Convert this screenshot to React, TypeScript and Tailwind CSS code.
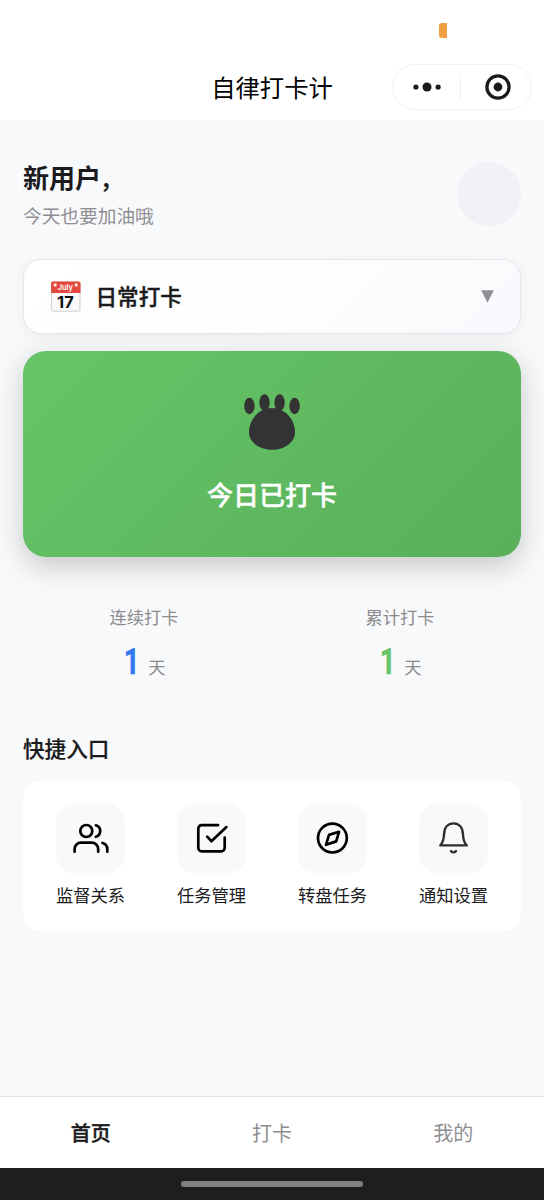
import type { ReactNode } from "react";

interface StatProps {
	label: string;
	value: number;
	valueClassName: string;
}

interface Shortcut {
	id: number;
	label: string;
	icon: ReactNode;
}

const shortcuts: Shortcut[] = [
	{
		id: 1,
		label: "监督关系",
		icon: (
			<g stroke="#000" strokeWidth="2.7">
				<circle cx="13.8" cy="10.5" r="6" />
				<path d="M23.4 4.8A6 6 0 0 1 23.4 16.3" />
				<path d="M2.1 31.2V28.6A6.4 6.4 0 0 1 8.5 22.2H19.3A6.4 6.4 0 0 1 25.7 28.6V31.2" />
				<path d="M30 22.5C33 23.4 34.8 25.8 34.8 28.6V31.2" />
			</g>
		),
	},
	{
		id: 2,
		label: "任务管理",
		icon: (
			<g stroke="#000" strokeWidth="2.7">
				<path d="M24.5 4.7H8.2A3.4 3.4 0 0 0 4.8 8.1V27.4A3.4 3.4 0 0 0 8.2 30.8H27.8A3.4 3.4 0 0 0 31.2 27.4V17.2" />
				<path d="M13.7 16.2L17.9 20.7L32.9 6.6" />
			</g>
		),
	},
	{
		id: 3,
		label: "转盘任务",
		icon: (
			<g stroke="#000" strokeWidth="2.7">
				<circle cx="17.9" cy="17.6" r="14.4" />
				<path d="M24.5 11.3L21.7 20.9L11.5 24.3L14.5 14.4Z" />
			</g>
		),
	},
	{
		id: 4,
		label: "通知设置",
		icon: (
			<g stroke="#2f2f31" strokeWidth="2.4">
				<path d="M4.8 24.9H31.2C28.4 21.8 27.7 18.4 27.5 14.2C27.3 7 23.6 2.9 18 2.9C12.4 2.9 8.7 7 8.5 14.2C8.3 18.4 7.6 21.8 4.8 24.9Z" />
				<path d="M15.5 30.6Q18 33.2 20.5 30.6" />
			</g>
		),
	},
];

const tabs = [
	{ id: 1, label: "首页", active: true },
	{ id: 2, label: "打卡", active: false },
	{ id: 3, label: "我的", active: false },
];

function Header() {
	return (
		<header className="relative h-[120px] shrink-0 bg-white">
			<div className="absolute left-[439px] top-[23px] h-[15px] w-[8px] rounded-l-[3px] bg-[#f0a040]" />
			<h1 className="pt-[69px] text-center text-[24.3px] leading-[36px] text-black">自律打卡计</h1>
			<div className="absolute right-[12px] top-[64px] flex h-[46px] w-[140px] items-center rounded-full border border-[#f1f1f1]">
				<div className="flex flex-1 justify-center">
					<svg width="28" height="10" viewBox="0 0 28 10" fill="#1a1a1a">
						<circle cx="2.9" cy="5" r="2.6" />
						<circle cx="14" cy="5" r="4.5" />
						<circle cx="25.1" cy="5" r="2.6" />
					</svg>
				</div>
				<div className="h-[26px] w-px bg-[#f0f0f0]" />
				<div className="flex flex-1 justify-center pl-[3px]">
					<svg width="26" height="26" viewBox="0 0 26 26">
						<circle cx="13" cy="13" r="11.1" fill="none" stroke="#1a1a1a" strokeWidth="3.3" />
						<circle cx="13" cy="13" r="4.4" fill="#1a1a1a" />
					</svg>
				</div>
			</div>
		</header>
	);
}

function CalendarIcon() {
	return (
		<svg width="30" height="31" viewBox="0 0 30 31">
			<rect x="0.6" y="1" width="28.4" height="29.2" rx="1.5" fill="#fafafa" stroke="#cfcfcf" />
			<path d="M0.1 12V2A1.5 1.5 0 0 1 1.6 0.5H28A1.5 1.5 0 0 1 29.5 2V12Z" fill="#e2483d" />
			<circle cx="4.2" cy="4" r="1.7" fill="#fbe3dc" />
			<circle cx="25.2" cy="4" r="1.7" fill="#fbe3dc" />
			<text x="14.4" y="9.4" textAnchor="middle" fontSize="7.4" fontWeight="600" fill="#fff" fontFamily="Inter, sans-serif">
				July
			</text>
			<text x="14.4" y="27.2" textAnchor="middle" fontSize="16.5" fontWeight="700" fill="#111" fontFamily="Inter, sans-serif">
				17
			</text>
		</svg>
	);
}

function PawIcon() {
	return (
		<svg width="58" height="58" viewBox="0 0 58 58" fill="#333">
			<ellipse cx="6.4" cy="13" rx="5.2" ry="8.2" />
			<ellipse cx="21.5" cy="9.6" rx="5.2" ry="8.4" />
			<ellipse cx="36.6" cy="9.6" rx="5.2" ry="8.4" />
			<ellipse cx="51.6" cy="13" rx="5.2" ry="8.2" />
			<path d="M29 15C41.7 15 52 26 52 39.5C52 49 41.7 56.8 29 56.8C16.3 56.8 6 49 6 39.5C6 26 16.3 15 29 15Z" />
		</svg>
	);
}

function Stat(props: StatProps) {
	const { label, value, valueClassName } = props;

	return (
		<div className="flex flex-1 flex-col items-center">
			<p className="text-[17.3px] leading-[26px] text-[#8b8b8e]">{label}</p>
			<p className="mt-[10px] flex items-baseline gap-[11px] pl-[1px] leading-[44px]">
				<span className={valueClassName}>{value}</span>
				<span className="text-[17.3px] text-[#8b8b8e]">天</span>
			</p>
		</div>
	);
}

export default function App() {
	return (
		<div className="flex h-[1200px] w-[544px] flex-col overflow-hidden bg-[#f8f9fb] font-['Noto_Sans_CJK_SC',sans-serif] text-[#1b1b1d]">
			<Header />
			<main className="flex-1 px-[23px]">
				<div className="flex h-[139px] items-start justify-between pt-[42px]">
					<div className="-mt-[5px]">
						<h2 className="text-[26px] font-bold leading-[40px]">
							新用户<span className="-ml-[1px] text-[22px] leading-none">，</span>
						</h2>
						<p className="mt-[4px] text-[18.7px] leading-[28px] text-[#8e8e92]">今天也要加油哦</p>
					</div>
					<div className="size-[64px] rounded-full bg-[#f2f1f6]" />
				</div>

				<button className="flex h-[75px] w-full items-center rounded-[18px] border-[1.5px] border-[#e4e5ea] bg-linear-135 from-white via-[#fdfefe] to-[#f8f9fc] pl-[26.5px] pr-[26px] shadow-[0_3px_14px_rgba(0,0,0,0.05)]">
					<CalendarIcon />
					<span className="-mt-[2px] ml-[15px] flex-1 text-left text-[21.6px] font-medium leading-[32px] [-webkit-text-stroke:0.4px]">日常打卡</span>
					<svg width="13" height="13" viewBox="0 0 13 13" fill="#8e8e92">
						<path d="M0.2 0.2H12.8L6.5 12.8Z" />
					</svg>
				</button>

				<div className="mt-[17px] flex h-[206px] flex-col items-center rounded-[23px] bg-linear-135 from-[#65c566] to-[#5aaf5b] pt-[42px] shadow-[0_9px_29px_rgba(0,0,0,0.2)]">
					<PawIcon />
					<p className="mt-[23px] text-[26px] font-medium leading-[40px] text-white [-webkit-text-stroke:0.4px]">今日已打卡</p>
				</div>

				<div className="mt-[47px] flex gap-[14px]">
					<Stat
						label="连续打卡"
						value={1}
						valueClassName="w-[14px] origin-left scale-x-75 indent-[1px] font-['Roboto'] text-[37px] font-bold text-[#3478f0] [-webkit-text-stroke:0.4px]"
					/>
					<Stat
						label="累计打卡"
						value={1}
						valueClassName="w-[14px] origin-left scale-x-75 indent-[1px] font-['Roboto'] text-[37px] font-bold text-[#65c368] [-webkit-text-stroke:0.4px]"
					/>
				</div>

				<h3 className="mt-[43px] text-[21.6px] font-medium leading-[32px] [-webkit-text-stroke:0.2px]">快捷入口</h3>
				<div className="mt-[17px] flex h-[150px] justify-between rounded-[18px] bg-white px-[33px] pt-[23px]">
					{shortcuts.map((item) => (
						<div key={item.id} className="flex w-[69px] flex-col items-center">
							<div className="flex size-[69px] items-center justify-center rounded-[18px] bg-[#f8f9fb]">
								<svg
									width="37"
									height="37"
									viewBox="-0.5 -0.5 37 37"
									fill="none"
									strokeLinecap="round"
									strokeLinejoin="round"
								>
									{item.icon}
								</svg>
							</div>
							<p className="mt-[9px] whitespace-nowrap text-[17.3px] leading-[26px]">{item.label}</p>
						</div>
					))}
				</div>
			</main>

			<nav className="flex h-[72px] shrink-0 items-center border-t border-[#e3e3ec] bg-white">
				{tabs.map((tab) => (
					<span
						key={tab.id}
						className={
							tab.active
								? "flex-1 text-center text-[20px] font-medium leading-[30px] text-[#1b1b1d] [-webkit-text-stroke:0.4px]"
								: "flex-1 text-center text-[20px] leading-[30px] text-[#8e8e92]"
						}
					>
						{tab.label}
					</span>
				))}
			</nav>
			<div className="flex h-[32px] shrink-0 justify-center bg-[#1e1e1e] pt-[13px]">
				<div className="h-[6px] w-[182px] rounded-full bg-[#808080]" />
			</div>
		</div>
	);
}
